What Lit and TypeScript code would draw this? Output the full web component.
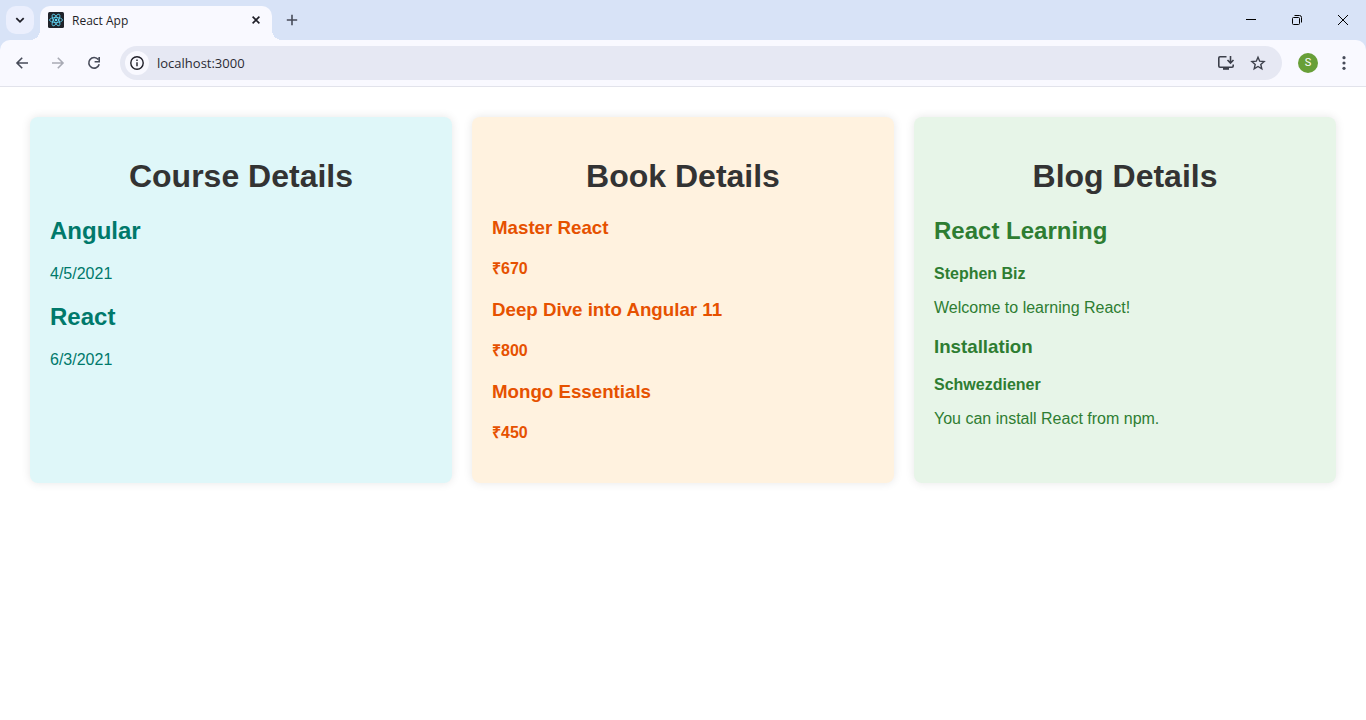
import { LitElement, html, css } from "lit";
import { customElement } from "lit/decorators.js";

const courses = [
  { name: "Angular", date: "4/5/2021" },
  { name: "React", date: "6/3/2021" },
];

const books = [
  { name: "Master React", price: 670 },
  { name: "Deep Dive into Angular 11", price: 800 },
  { name: "Mongo Essentials", price: 450 },
];

@customElement("browser-chrome")
class BrowserChrome extends LitElement {
  static styles = css`
    :host {
      display: block;
      font-family: "Segoe UI", "Open Sans", "Noto Sans", sans-serif;
      color: #1f1f28;
    }
    svg {
      display: block;
      fill: none;
      stroke: currentColor;
    }
    button {
      display: grid;
      place-items: center;
      flex: none;
      margin: 0;
      padding: 0;
      border: 0;
      background: none;
      color: inherit;
      font: inherit;
    }
    .strip {
      display: flex;
      height: 40px;
      background: #d8e3f7;
    }
    .search {
      width: 28px;
      height: 28px;
      margin: 6px 6px 0;
      border-radius: 10px;
      background: #ebeffd;
    }
    .tab {
      position: relative;
      display: flex;
      align-items: center;
      flex: 0 1 232px;
      box-sizing: border-box;
      margin-top: 6px;
      padding: 0 8px 6px;
      border-radius: 10px 10px 0 0;
      background: #f9f9ff;
    }
    .tab::before,
    .tab::after {
      content: "";
      position: absolute;
      bottom: 0;
      width: 10px;
      height: 10px;
    }
    .tab::before {
      right: 100%;
      background: radial-gradient(circle at 0 0, transparent 10px, #f9f9ff 10px);
    }
    .tab::after {
      left: 100%;
      background: radial-gradient(circle at 100% 0, transparent 10px, #f9f9ff 10px);
    }
    .title {
      flex: 1;
      margin-left: 8px;
      font-size: 12px;
      line-height: 18px;
      padding-top: 2px;
    }
    .close {
      width: 16px;
      height: 16px;
    }
    .add {
      width: 28px;
      height: 28px;
      margin: 6px;
      color: #474b59;
    }
    .window {
      display: flex;
      margin-left: auto;
      color: #000;
    }
    .window button {
      width: 46px;
      height: 40px;
    }
    .toolbar {
      background: linear-gradient(#d8e3f7, #d8e3f7) top / 100% 10px no-repeat;
    }
    .bar {
      display: flex;
      align-items: center;
      padding: 6px 8px;
      border-bottom: 1px solid #e2e3eb;
      border-radius: 10px 10px 0 0;
      background: #f9f9ff;
      color: #474b59;
    }
    .nav {
      width: 28px;
      height: 28px;
      margin-right: 8px;
    }
    .nav:disabled {
      color: #a9abb5;
    }
    .omnibox {
      display: flex;
      align-items: center;
      flex: 1;
      height: 34px;
      margin-left: 4px;
      padding: 0 10px 0 5px;
      border-radius: 17px;
      background: #e6e8f3;
      color: #3c3f4a;
    }
    .site {
      width: 24px;
      height: 24px;
      border-radius: 12px;
      background: #f9f9ff;
      color: #1f1f28;
    }
    .address {
      flex: 1;
      min-width: 0;
      margin: 0;
      padding: 0 8px;
      border: 0;
      outline: 0;
      background: none;
      color: #2b2b33;
      font: 13px/20px "Segoe UI", "Open Sans", "Noto Sans", sans-serif;
    }
    .action {
      width: 28px;
      height: 28px;
      margin-left: 4px;
    }
    .profile {
      width: 20px;
      height: 20px;
      margin: 0 12px 0 16px;
      border-radius: 10px;
      background: #689f38;
      color: #fff;
      font: 11px/20px Roboto, sans-serif;
    }
    .more {
      width: 28px;
      height: 28px;
    }
  `;

  render() {
    return html`
      <div class="strip">
        <button class="search" aria-label="Search tabs">
          <svg width="12" height="12" viewBox="0 0 12 12" stroke-width="1.8"><path d="M2.3 4.2L6 7.8l3.7-3.6" /></svg>
        </button>
        <div class="tab">
          <svg width="16" height="16" viewBox="0 0 16 16" stroke="none">
            <rect width="16" height="16" rx="1.5" fill="#20232a" stroke="none" />
            <g stroke="#61dafb" stroke-width=".8">
              <ellipse cx="8" cy="8" rx="6.5" ry="2.5" />
              <ellipse cx="8" cy="8" rx="6.5" ry="2.5" transform="rotate(60 8 8)" />
              <ellipse cx="8" cy="8" rx="6.5" ry="2.5" transform="rotate(120 8 8)" />
            </g>
            <circle cx="8" cy="8" r="1.3" fill="#61dafb" stroke="none" />
          </svg>
          <span class="title">React App</span>
          <button class="close" aria-label="Close tab">
            <svg width="16" height="16" viewBox="0 0 16 16" stroke-width="1.6"><path d="M4.6 4.6l6.8 6.8M11.4 4.6l-6.8 6.8" /></svg>
          </button>
        </div>
        <button class="add" aria-label="New tab">
          <svg width="12" height="12" viewBox="0 0 12 12" stroke-width="1.6"><path d="M6 .8v10.4M.8 6h10.4" /></svg>
        </button>
        <div class="window">
          <button aria-label="Minimize">
            <svg width="12" height="12" viewBox="0 0 12 12"><path d="M1 5.5h10" /></svg>
          </button>
          <button aria-label="Restore">
            <svg width="12" height="12" viewBox="0 0 12 12">
              <rect x="1.5" y="3.5" width="7" height="7" rx="1" />
              <path d="M3.5 1.5H8.5Q10.5 1.5 10.5 3.5V8.5" />
            </svg>
          </button>
          <button aria-label="Close window">
            <svg width="12" height="12" viewBox="0 0 12 12" stroke-width="1"><path d="M1 1l10 10M11 1L1 11" /></svg>
          </button>
        </div>
      </div>
      <div class="toolbar">
        <div class="bar">
          <button class="nav" aria-label="Back">
            <svg width="16" height="16" viewBox="0 0 16 16" stroke-width="1.6"><path d="M14 8H3.2M8.2 2.8L3 8l5.2 5.2" /></svg>
          </button>
          <button class="nav" aria-label="Forward" disabled>
            <svg width="16" height="16" viewBox="0 0 16 16" stroke-width="1.6"><path d="M2 8h10.8M7.8 2.8L13 8l-5.2 5.2" /></svg>
          </button>
          <button class="nav" aria-label="Reload">
            <svg width="16" height="16" viewBox="0 0 16 16" stroke-width="1.6">
              <path d="M12.3 4.6A5.3 5.3 0 1 0 13.2 9.3M13.2 2v4.7H8.6" />
            </svg>
          </button>
          <div class="omnibox">
            <button class="site" aria-label="Site information">
              <svg width="16" height="16" viewBox="0 0 16 16" stroke-width="1.4">
                <circle cx="8" cy="8" r="6.2" />
                <path d="M8 7.2v4M8 4.6v1.5" />
              </svg>
            </button>
            <input class="address" aria-label="Address" value="localhost:3000" />
            <button class="action" aria-label="Install app">
              <svg width="18" height="18" viewBox="0 0 18 18" stroke-width="1.6">
                <path d="M9.5 2.8H3Q1.8 2.8 1.8 4V12Q1.8 13.2 3 13.2H15Q16.2 13.2 16.2 12V10.5M13.5 2v6.5M10.5 6l3 3 3-3" />
                <path d="M6 14.8h6" stroke-width="2" />
              </svg>
            </button>
            <button class="action" aria-label="Bookmark this tab">
              <svg width="16" height="16" viewBox="0 0 16 16" stroke-width="1.4">
                <path d="M8 2.2l1.7 4 4.4.4-3.3 2.9 1 4.3L8 11.5l-3.8 2.3 1-4.3-3.3-2.9 4.4-.4z" />
              </svg>
            </button>
          </div>
          <button class="profile" aria-label="Profile S">S</button>
          <button class="more" aria-label="Menu">
            <svg width="16" height="16" viewBox="0 0 16 16">
              <g fill="currentColor" stroke="none">
                <circle cx="8" cy="2.7" r="1.6" /><circle cx="8" cy="8" r="1.6" /><circle cx="8" cy="13.3" r="1.6" />
              </g>
            </svg>
          </button>
        </div>
      </div>
    `;
  }
}

@customElement("app-root")
class AppRoot extends LitElement {
  static styles = css`
    :host {
      display: block;
      min-height: 100vh;
      background: #fff;
      font-family: Arial, "Liberation Sans", sans-serif;
      font-size: 16px;
      line-height: 18px;
    }
    .page {
      display: grid;
      grid-template-columns: repeat(3, minmax(0, 1fr));
      gap: 20px;
      padding: 30px;
    }
    .card {
      padding: 20px;
      border-radius: 8px;
      box-shadow: 0 0 10px rgba(0, 0, 0, 0.1);
    }
    .course {
      background: #dff7f9;
      color: #00796b;
    }
    .book {
      background: #fff2df;
      color: #e65100;
    }
    .blog {
      background: #e7f5e8;
      color: #2e7d32;
    }
    h1 {
      margin: 21px 0 23px;
      color: #333;
      font-size: 32px;
      line-height: 36px;
      text-align: center;
    }
    h2 {
      margin: 20px 0;
      font-size: 24px;
      line-height: 28px;
    }
    h3 {
      margin: 19px 0;
      line-height: 21px;
    }
    h4 {
      margin: 21px 0;
      font-size: 16px;
      line-height: 19px;
    }
    p {
      margin: 16px 0;
    }
  `;

  render() {
    return html`
      <browser-chrome></browser-chrome>
      <main class="page">
        <section class="card course">
          <h1>Course Details</h1>
          ${courses.map((c) => html`<h2>${c.name}</h2><p>${c.date}</p>`)}
        </section>
        <section class="card book">
          <h1>Book Details</h1>
          ${books.map((b) => html`<h3>${b.name}</h3><h4>₹${b.price}</h4>`)}
        </section>
        <section class="card blog">
          <h1>Blog Details</h1>
          <h2>React Learning</h2>
          <p><b>Stephen Biz</b></p>
          <p>Welcome to learning React!</p>
          <h3>Installation</h3>
          <p><b>Schwezdiener</b></p>
          <p>You can install React from npm.</p>
        </section>
      </main>
    `;
  }
}
